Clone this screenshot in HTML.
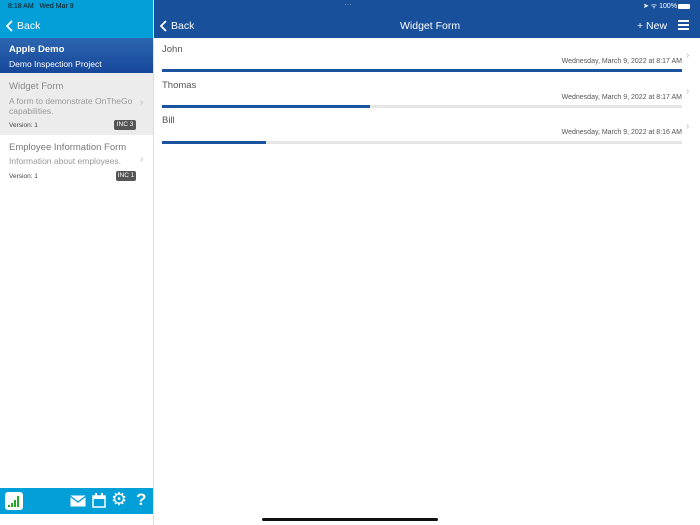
<!DOCTYPE html>
<html><head><style>
*{margin:0;padding:0;box-sizing:border-box}
body{width:700px;height:525px;position:relative;overflow:hidden;background:#fff;font-family:"Liberation Sans",sans-serif}
.a{position:absolute}
</style></head><body>
<div class="a" style="left:0;top:0;width:154px;height:38px;background:#039fd8"></div>
<div class="a" style="left:154px;top:0;width:546px;height:38px;background:#18509c"></div>
<div class="a" style="left:153px;top:0;width:1px;height:525px;background:#ddd"></div>
<div class="a" style="left:8px;top:3px;font-size:7px;color:#111">8:18 AM&nbsp;&nbsp; Wed Mar 9</div>
<div class="a" style="left:344px;top:0px;font-size:8px;color:#9ab">···</div>
<div class="a" style="left:643px;top:2px;font-size:7px;color:#fff">➤ ᯤ 100%</div>
<div class="a" style="left:678px;top:4px;width:12px;height:5px;background:#fff;border-radius:1px"></div>
<svg class="a" style="left:6px;top:20px" width="8" height="12"><path d="M6 1L1 6l5 5" stroke="#fff" stroke-width="1.8" fill="none"/></svg>
<div class="a" style="left:17px;top:20px;font-size:10.5px;color:#fff">Back</div>
<svg class="a" style="left:160px;top:20px" width="8" height="12"><path d="M6 1L1 6l5 5" stroke="#fff" stroke-width="1.8" fill="none"/></svg>
<div class="a" style="left:171px;top:20px;font-size:10.5px;color:#fff">Back</div>
<div class="a" style="left:400px;top:20px;font-size:10.5px;color:#fff">Widget Form</div>
<div class="a" style="left:637px;top:20px;font-size:10.5px;color:#fff">+ New</div>
<div class="a" style="left:678px;top:20px;width:11px;height:2px;background:#fff;box-shadow:0 4px 0 #fff,0 8px 0 #fff"></div>
<div class="a" style="left:0;top:38px;width:153px;height:35px;background:linear-gradient(#2c66b0,#17479a)"></div>
<div class="a" style="left:9px;top:44px;font-size:9.5px;font-weight:bold;color:#fff">Apple Demo</div>
<div class="a" style="left:9px;top:59px;font-size:8.5px;color:#fff">Demo Inspection Project</div>
<div class="a" style="left:0;top:73px;width:153px;height:62px;background:#ececec"></div>
<div class="a" style="left:9px;top:81px;font-size:9.5px;color:#888">Widget Form</div>
<div class="a" style="left:9px;top:96px;font-size:8.5px;color:#999;line-height:10px;width:135px">A form to demonstrate OnTheGo capabilities.</div>
<div class="a" style="left:9px;top:122px;font-size:6.5px;color:#444">Version: 1</div>
<div class="a" style="left:114px;top:120px;width:22px;height:10px;background:#555;border-radius:2px;color:#fff;font-size:6.5px;text-align:center;line-height:10px">INC 3</div>
<div class="a" style="left:140px;top:97px;font-size:10px;color:#bbb">›</div>
<div class="a" style="left:9px;top:142px;font-size:9.5px;color:#777">Employee Information Form</div>
<div class="a" style="left:9px;top:156px;font-size:8.5px;color:#999">Information about employees.</div>
<div class="a" style="left:9px;top:173px;font-size:6.5px;color:#444">Version: 1</div>
<div class="a" style="left:116px;top:171px;width:20px;height:10px;background:#555;border-radius:2px;color:#fff;font-size:6.5px;text-align:center;line-height:10px">INC 1</div>
<div class="a" style="left:140px;top:154px;font-size:10px;color:#bbb">›</div>

<div class="a" style="left:162px;top:44px;font-size:9.5px;color:#555">John</div>
<div class="a" style="left:480px;top:58px;width:202px;text-align:right;font-size:7px;color:#555">Wednesday, March 9, 2022 at 8:17 AM</div>
<div class="a" style="left:162px;top:69px;width:520px;height:3px;background:#1a53a0"></div>
<div class="a" style="left:686px;top:50px;font-size:10px;color:#bbb">›</div>
<div class="a" style="left:162px;top:80px;font-size:9.5px;color:#555">Thomas</div>
<div class="a" style="left:480px;top:94px;width:202px;text-align:right;font-size:7px;color:#555">Wednesday, March 9, 2022 at 8:17 AM</div>
<div class="a" style="left:162px;top:105px;width:520px;height:3px;background:#e6e6e6"></div>
<div class="a" style="left:162px;top:105px;width:208px;height:3px;background:#1a53a0"></div>
<div class="a" style="left:686px;top:86px;font-size:10px;color:#bbb">›</div>
<div class="a" style="left:162px;top:115px;font-size:9.5px;color:#555">Bill</div>
<div class="a" style="left:480px;top:129px;width:202px;text-align:right;font-size:7px;color:#555">Wednesday, March 9, 2022 at 8:16 AM</div>
<div class="a" style="left:162px;top:141px;width:520px;height:3px;background:#e6e6e6"></div>
<div class="a" style="left:162px;top:141px;width:104px;height:3px;background:#1a53a0"></div>
<div class="a" style="left:686px;top:121px;font-size:10px;color:#bbb">›</div>

<div class="a" style="left:0;top:488px;width:153px;height:26px;background:#039fd8"></div>
<div class="a" style="left:5px;top:492px;width:18px;height:18px;background:#fff;border-radius:3px"></div>
<svg class="a" style="left:7px;top:494px" width="14" height="14"><g fill="#2a2"><rect x="1" y="11" width="2" height="2"/><rect x="4" y="9" width="2" height="4"/><rect x="7" y="6" width="2" height="7"/><rect x="10" y="2" width="2" height="11"/></g></svg>
<svg class="a" style="left:70px;top:495px" width="16" height="12"><rect x="0.5" y="0.5" width="15" height="11" fill="#fff"/><path d="M0 1l8 6 8-6" stroke="#039fd8" stroke-width="1.3" fill="none"/></svg>
<svg class="a" style="left:92px;top:493px" width="14" height="15"><rect x="1" y="3" width="12" height="11" fill="none" stroke="#fff" stroke-width="1.5"/><rect x="1" y="3" width="12" height="3" fill="#fff"/><rect x="3" y="0" width="2" height="4" fill="#fff"/><rect x="9" y="0" width="2" height="4" fill="#fff"/></svg>
<div class="a" style="left:111px;top:489px;font-size:18px;font-weight:bold;color:#fff;font-family:'DejaVu Sans'">⚙</div>
<div class="a" style="left:136px;top:490px;font-size:17px;font-weight:bold;color:#fff">?</div>
<div class="a" style="left:262px;top:518px;width:176px;height:3px;background:#111;border-radius:2px"></div>
</body></html>
